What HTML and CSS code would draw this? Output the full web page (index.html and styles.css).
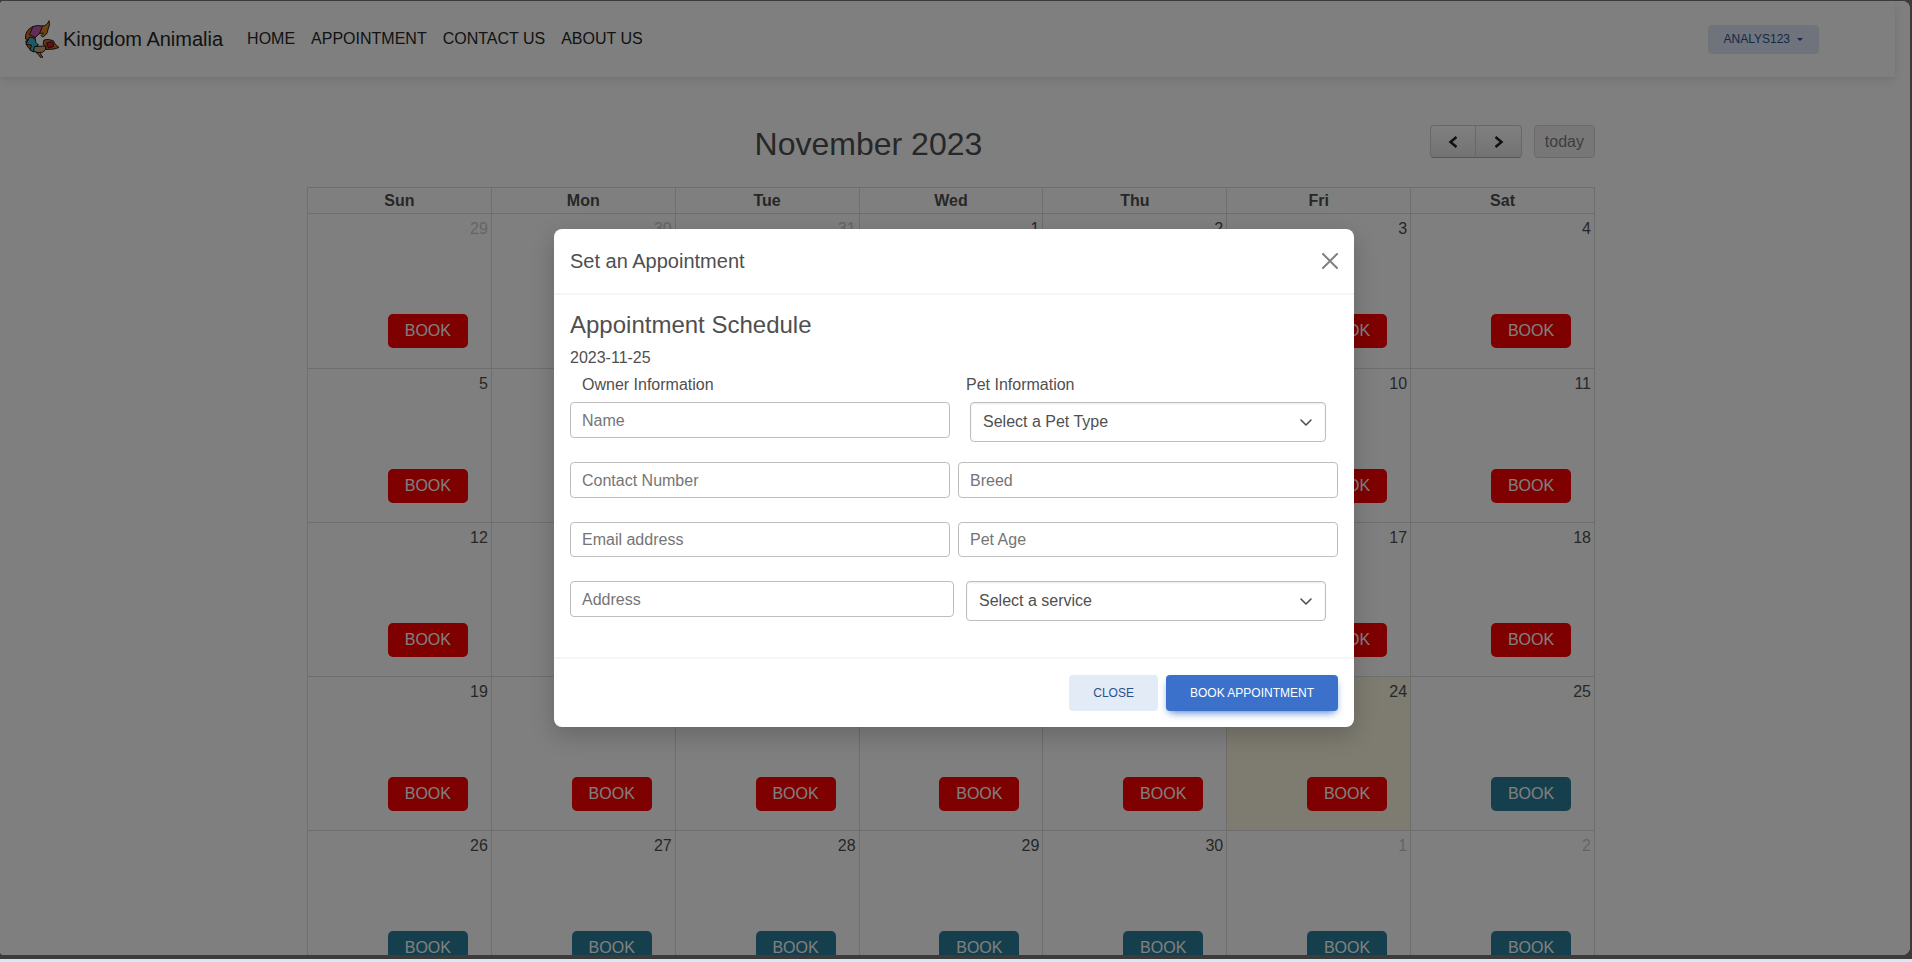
FILE: index.html
```html
<!DOCTYPE html>
<html lang="en">
<head>
<meta charset="utf-8">
<title>Kingdom Animalia</title>
<link rel="stylesheet" href="styles.css">
</head>
<body>
<div class="window">
<div class="screen">
  <header class="navbar">
    <a class="brand" href="#">
      <svg class="logo" viewBox="0 0 34 38" aria-hidden="true">
        <g stroke="#261c20" stroke-width="1" stroke-linejoin="round">
          <path fill="#d98a20" d="M17 6 Q22 6 24 .7 Q25.500 5 23 9 Q23 13 20.500 15 L17.500 17 L16 15.500 L18.500 13 L14.300 13.500Z"/>
          <path fill="#d96a20" d="M1.700 12 Q4 8 8 6.500 L6 14 L11 15.500 Q9.500 18 10 21 L.5 19 Q0 15 1.700 12Z"/>
          <path fill="#c657ae" d="M8 6.500 Q12 4.800 17.500 6 L14.300 14 Q11.500 15.500 10.500 17.500 L4.500 14.500Z"/>
          <path fill="#d96a20" d="M.7 21 L4 20 L9 29 L9.500 32 Q1.500 29 .7 21Z"/>
          <path fill="#36b4cd" d="M4.500 17 L10 18.500 Q10 23 13.500 25 L9.500 27 L8.500 32 L5 30 L6.500 25 L1 24.500Z"/>
          <path fill="#c8aa7c" d="M9.500 26.500 L21 26 Q21 31 18 32 Q13 34 8.500 31Z"/>
          <path fill="#d96a20" d="M18 24.500 L19 20 Q23 18.500 28.300 20.700 L30 24 L34 27.500 L29 29 L21 29.500 L21 26Z"/>
          <path fill="#d8172c" d="M21.500 23 Q24 21 28 22.500 L28.500 26.500 L23.500 28Z"/>
          <path fill="#d98a20" d="M11 32.500 L15.500 32.500 L16 35 L18 37 L15.500 37.500 L13.500 34.500Z"/>
        </g>
      </svg>
      <span>Kingdom Animalia</span>
    </a>
    <nav class="links">
      <a href="#">HOME</a>
      <a href="#">APPOINTMENT</a>
      <a href="#">CONTACT US</a>
      <a href="#">ABOUT US</a>
    </nav>
    <button class="account" type="button">ANALYS123<span class="caret"></span></button>
  </header>

  <main class="page">
    <section class="calendar">
      <div class="toolbar">
        <h2>November 2023</h2>
        <div class="controls">
          <div class="group">
            <button type="button" aria-label="Previous month"><svg viewBox="0 0 12 14"><path d="M9.500 2L3.500 7L9.500 12"/></svg></button>
            <button type="button" aria-label="Next month"><svg viewBox="0 0 12 14"><path d="M3.500 2L9.500 7L3.500 12"/></svg></button>
          </div>
          <button class="today-btn" type="button" disabled>today</button>
        </div>
      </div>
      <table class="month">
        <thead>
          <tr><th>Sun</th><th>Mon</th><th>Tue</th><th>Wed</th><th>Thu</th><th>Fri</th><th>Sat</th></tr>
        </thead>
        <tbody>
          <tr>
            <td class="other"><span>29</span><button class="book full">BOOK</button></td>
            <td class="other"><span>30</span><button class="book full">BOOK</button></td>
            <td class="other"><span>31</span><button class="book full">BOOK</button></td>
            <td><span>1</span><button class="book full">BOOK</button></td>
            <td><span>2</span><button class="book full">BOOK</button></td>
            <td><span>3</span><button class="book full">BOOK</button></td>
            <td><span>4</span><button class="book full">BOOK</button></td>
          </tr>
          <tr>
            <td><span>5</span><button class="book full">BOOK</button></td>
            <td><span>6</span><button class="book full">BOOK</button></td>
            <td><span>7</span><button class="book full">BOOK</button></td>
            <td><span>8</span><button class="book full">BOOK</button></td>
            <td><span>9</span><button class="book full">BOOK</button></td>
            <td><span>10</span><button class="book full">BOOK</button></td>
            <td><span>11</span><button class="book full">BOOK</button></td>
          </tr>
          <tr>
            <td><span>12</span><button class="book full">BOOK</button></td>
            <td><span>13</span><button class="book full">BOOK</button></td>
            <td><span>14</span><button class="book full">BOOK</button></td>
            <td><span>15</span><button class="book full">BOOK</button></td>
            <td><span>16</span><button class="book full">BOOK</button></td>
            <td><span>17</span><button class="book full">BOOK</button></td>
            <td><span>18</span><button class="book full">BOOK</button></td>
          </tr>
          <tr>
            <td><span>19</span><button class="book full">BOOK</button></td>
            <td><span>20</span><button class="book full">BOOK</button></td>
            <td><span>21</span><button class="book full">BOOK</button></td>
            <td><span>22</span><button class="book full">BOOK</button></td>
            <td><span>23</span><button class="book full">BOOK</button></td>
            <td class="today"><span>24</span><button class="book full">BOOK</button></td>
            <td><span>25</span><button class="book">BOOK</button></td>
          </tr>
          <tr>
            <td><span>26</span><button class="book">BOOK</button></td>
            <td><span>27</span><button class="book">BOOK</button></td>
            <td><span>28</span><button class="book">BOOK</button></td>
            <td><span>29</span><button class="book">BOOK</button></td>
            <td><span>30</span><button class="book">BOOK</button></td>
            <td class="other"><span>1</span><button class="book">BOOK</button></td>
            <td class="other"><span>2</span><button class="book">BOOK</button></td>
          </tr>
        </tbody>
      </table>
    </section>
  </main>

  <div class="backdrop">
    <form class="modal" role="dialog" aria-labelledby="modal-title">
      <div class="modal-header">
        <h5 id="modal-title">Set an Appointment</h5>
        <button class="dismiss" type="button" aria-label="Close dialog"><svg viewBox="0 0 16 16"><path d="M1 1L15 15M15 1L1 15"/></svg></button>
      </div>
      <div class="modal-body">
        <h4>Appointment Schedule</h4>
        <p class="date">2023-11-25</p>
        <div class="row captions">
          <label for="name">Owner Information</label>
          <label for="pet-type">Pet Information</label>
        </div>
        <div class="fields">
          <div class="row spaced">
            <input id="name" type="text" placeholder="Name">
            <div class="select"><select id="pet-type"><option>Select a Pet Type</option></select><svg viewBox="0 0 16 16"><path d="M3 6l5 5 5-5"/></svg></div>
          </div>
          <div class="row spaced">
            <input type="tel" placeholder="Contact Number" aria-label="Contact Number">
            <input type="text" placeholder="Breed" aria-label="Breed">
          </div>
          <div class="row spaced short">
            <input type="email" placeholder="Email address" aria-label="Email address">
            <input type="text" placeholder="Pet Age" aria-label="Pet Age">
          </div>
          <div class="row">
            <input type="text" placeholder="Address" aria-label="Address">
            <div class="select"><select aria-label="Service"><option>Select a service</option></select><svg viewBox="0 0 16 16"><path d="M3 6l5 5 5-5"/></svg></div>
          </div>
        </div>
      </div>
      <div class="modal-footer">
        <button class="btn" type="button">CLOSE</button>
        <button class="btn primary" type="submit">BOOK APPOINTMENT</button>
      </div>
    </form>
  </div>
</div>
</div>
</body>
</html>
```
FILE: styles.css
```css
* { box-sizing: border-box; }
body {
  margin: 0;
  height: 100vh;
  display: flex;
  flex-direction: column;
  background: #dce6f7;
  color: #4f4f4f;
  font: 16px/26px "Liberation Sans", Arial, sans-serif;
}
button, input, select { font: inherit; color: inherit; margin: 0; }
h2, h4, h5, p { margin: 0; font-weight: 400; }
a { color: inherit; text-decoration: none; }

.window {
  flex: 1;
  min-height: 0;
  display: flex;
  margin-bottom: 3px;
  padding: 1px 2px 4px 0;
  background: #3b3b3b;
}
.screen {
  position: relative;
  flex: 1;
  overflow: hidden;
  background: #fff;
  border-radius: 4px 8px 8px 4px;
}

/* Navigation bar */
.navbar {
  display: flex;
  align-items: center;
  height: 76px;
  margin-right: 15px;
  padding: 0 76px 0 25px;
  color: #262626;
  box-shadow: 0 4px 12px rgba(0, 0, 0, .07), 0 2px 4px rgba(0, 0, 0, .05);
}
.brand { display: flex; align-items: center; gap: 4px; font-size: 20px; }
.logo { width: 34px; height: 38px; }
.links { display: flex; gap: 16px; margin-left: 24px; }
.account {
  display: flex;
  align-items: center;
  gap: 7px;
  height: 29px;
  margin-left: auto;
  padding: 0 16px;
  border: 0;
  border-radius: 4px;
  background: #dfe7f6;
  color: #285192;
  font-size: 12px;
}
.caret { border: 3px solid transparent; border-top-color: currentColor; border-bottom: 0; }

/* Calendar */
.page { padding: 48px 8px 0 0; }
.calendar { max-width: 1288px; margin: 0 auto; }
.toolbar {
  display: flex;
  align-items: flex-start;
  height: 62px;
}
.toolbar h2 { flex: 1; font-size: 32px; line-height: 38px; text-align: center; }
.controls { display: flex; gap: 12px; }
.group { display: flex; }
.controls button {
  height: 33px;
  padding: 0 10px;
  border: 1px solid #d0d0d0;
  border-bottom-color: #b0b0b0;
  border-radius: 4px;
  background: linear-gradient(#fff, #e6e6e6);
  color: #333;
}
.group button { display: grid; place-items: center; width: 46px; border-radius: 4px 0 0 4px; }
.group button + button { margin-left: -1px; width: 47px; border-radius: 0 4px 4px 0; }
.group svg { width: 12px; height: 14px; fill: none; stroke: #222; stroke-width: 2.500; }
.controls .today-btn { background: #e6e6e6; opacity: .65; border-color: #bbb; line-height: 24px; }

.month { width: 100%; border-collapse: collapse; table-layout: fixed; }
.month th, .month td { border: 1px solid #ddd; padding: 0; }
.month th { height: 26px; line-height: 24px; }
.month td { height: 154px; vertical-align: top; }
.month tbody tr:first-child td { height: 155px; }
.month td > span { display: block; padding: 3px 3px 0 0; line-height: 24px; text-align: right; }
.other > span { opacity: .3; }
.today { background: #fcf8e3; }
.book {
  display: block;
  width: 80px;
  height: 34px;
  margin: 73px 23px 0 auto;
  padding: 0;
  border: 0;
  border-radius: 5px;
  background: #2a7f98;
  color: #fff;
}
.book.full { background: #f00; }

/* Appointment dialog */
.backdrop {
  position: absolute;
  inset: 0;
  display: grid;
  place-items: center;
  padding-right: 2px;
  background: rgba(0, 0, 0, .5);
}
.modal {
  width: 100%;
  max-width: 800px;
  background: #fff;
  border-radius: 8px;
  box-shadow: 0 8px 24px rgba(0, 0, 0, .2);
}
.modal-header {
  display: flex;
  align-items: center;
  justify-content: space-between;
  height: 66px;
  padding: 0 16px;
  border-bottom: 2px solid #f5f5f5;
}
.modal-header h5 { font-size: 20px; }
.dismiss { padding: 0; border: 0; background: none; line-height: 0; }
.dismiss svg { width: 16px; height: 16px; fill: none; stroke: #808080; stroke-width: 2; stroke-linecap: round; }
.modal-body { padding: 16px 16px 36px; }
.modal-body h4 { margin-bottom: 6px; font-size: 24px; line-height: 28px; }
.date { margin-bottom: 1px; }
.row { display: grid; grid-template-columns: 1fr 1fr; align-items: start; }
.spaced { gap: 8px; }
.captions { margin-bottom: 4px; }
.captions label { padding-left: 12px; }
.fields { display: grid; }
.fields .row { height: 60px; }
.fields .short { height: 59px; }
.fields .row:last-child { height: 40px; }
.fields input {
  width: 100%;
  height: 36px;
  padding: 1px 11px 0;
  border: 1px solid #bdbdbd;
  border-radius: 4px;
  background: #fff;
}
.fields .short input { height: 35px; }
.fields input::placeholder { color: #757575; opacity: 1; }
.select { position: relative; margin: 0 12px; }
.select select {
  appearance: none;
  display: block;
  width: 100%;
  height: 40px;
  padding: 0 36px 0 12px;
  border: 1px solid #bdbdbd;
  border-radius: 4px;
  background: #fff;
  box-shadow: inset 0 1px 2px rgba(0, 0, 0, .08);
}
.select svg {
  position: absolute;
  top: 12px;
  right: 12px;
  width: 16px;
  height: 16px;
  fill: none;
  stroke: #4f4f4f;
  stroke-width: 1.600;
  stroke-linecap: round;
  stroke-linejoin: round;
  pointer-events: none;
}
.modal-footer {
  display: flex;
  justify-content: flex-end;
  gap: 8px;
  padding: 16px;
  border-top: 2px solid #f5f5f5;
}
.btn {
  height: 36px;
  padding: 0 24px;
  border: 0;
  border-radius: 4px;
  background: #e3ebf7;
  color: #285192;
  font-size: 12px;
}
.btn.primary { background: #3b71ca; color: #fff; box-shadow: 0 4px 9px -3px #3b71ca; }
```
